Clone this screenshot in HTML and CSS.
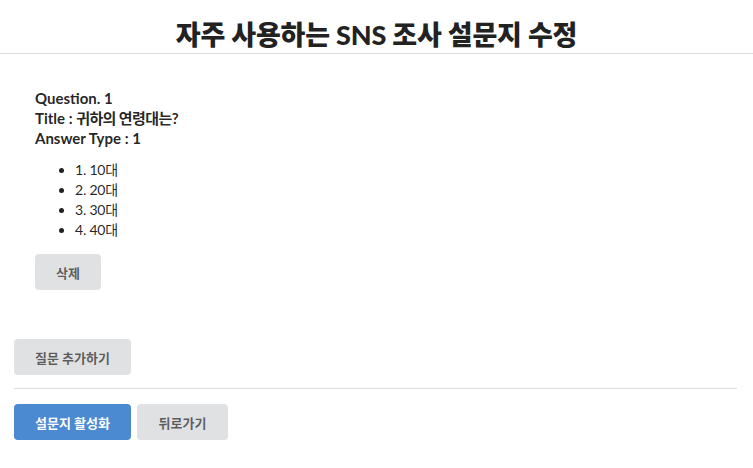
FILE: index.html
```html
<!DOCTYPE html>
<html lang="ko">
<head>
<meta charset="utf-8">
<link rel="stylesheet" href="styles.css">
</head>
<body>
<header class="page-header">
  <h1 class="page-title">자주 사용하는 SNS 조사 설문지 수정</h1>
</header>
<main class="content">
  <section class="question">
    <div class="question-meta">
      <div>Question. 1</div>
      <div>Title : <span class="ko">귀하의 연령대는</span>?</div>
      <div>Answer Type : 1</div>
    </div>
    <ul class="answers">
      <li>1. 10대</li>
      <li>2. 20대</li>
      <li>3. 30대</li>
      <li>4. 40대</li>
    </ul>
    <button class="btn btn-delete">삭제</button>
  </section>
  <div class="add-row">
    <button class="btn btn-add">질문 추가하기</button>
  </div>
  <hr class="divider">
  <div class="actions">
    <button class="btn btn-primary">설문지 활성화</button>
    <button class="btn btn-back">뒤로가기</button>
  </div>
</main>
</body>
</html>
```
FILE: styles.css
```css
html, body {
  margin: 0;
  padding: 0;
  background: #fff;
}
body {
  font-family: Lato, "Noto Sans CJK KR", sans-serif;
  font-size: 14px;
  line-height: 20px;
  color: rgba(0,0,0,0.87);
}
.page-header {
  border-bottom: 1px solid #dcdcdc;
  padding-top: 17px;
}
.page-title {
  margin: 0;
  text-align: center;
  font-size: 27px;
  line-height: 36px;
  font-weight: 900;
  color: #222;
  letter-spacing: -0.2px;
}
.content {
  padding: 0 16px 0 14px;
}
.question {
  padding: 34px 0 0 21px;
}
.question-meta {
  font-weight: 700;
  font-size: 15px;
  line-height: 20px;
}
.question-meta .ko {
  letter-spacing: -0.6px;
}
.answers {
  margin: 12px 0 14px;
  padding-left: 40px;
}
.answers li {
  line-height: 20px;
  letter-spacing: -0.2px;
}
.btn {
  display: inline-block;
  border: none;
  border-radius: 4px;
  height: 36px;
  padding: 0;
  font-family: Lato, "Noto Sans CJK KR", sans-serif;
  font-size: 13px;
  font-weight: 700;
  background: #e0e1e2;
  color: rgba(0,0,0,0.6);
  cursor: pointer;
}
.btn-delete { width: 66px; }
.btn-add { width: 117px; }
.btn-primary { width: 117px; background: #4b89d0; color: #fff; }
.btn-back { width: 91px; }
.add-row {
  margin-top: 49px;
}
.divider {
  border: none;
  border-top: 1px solid #dcdcdc;
  margin: 13px 0 15px;
}
.actions {
  display: flex;
  gap: 6px;
}
```
